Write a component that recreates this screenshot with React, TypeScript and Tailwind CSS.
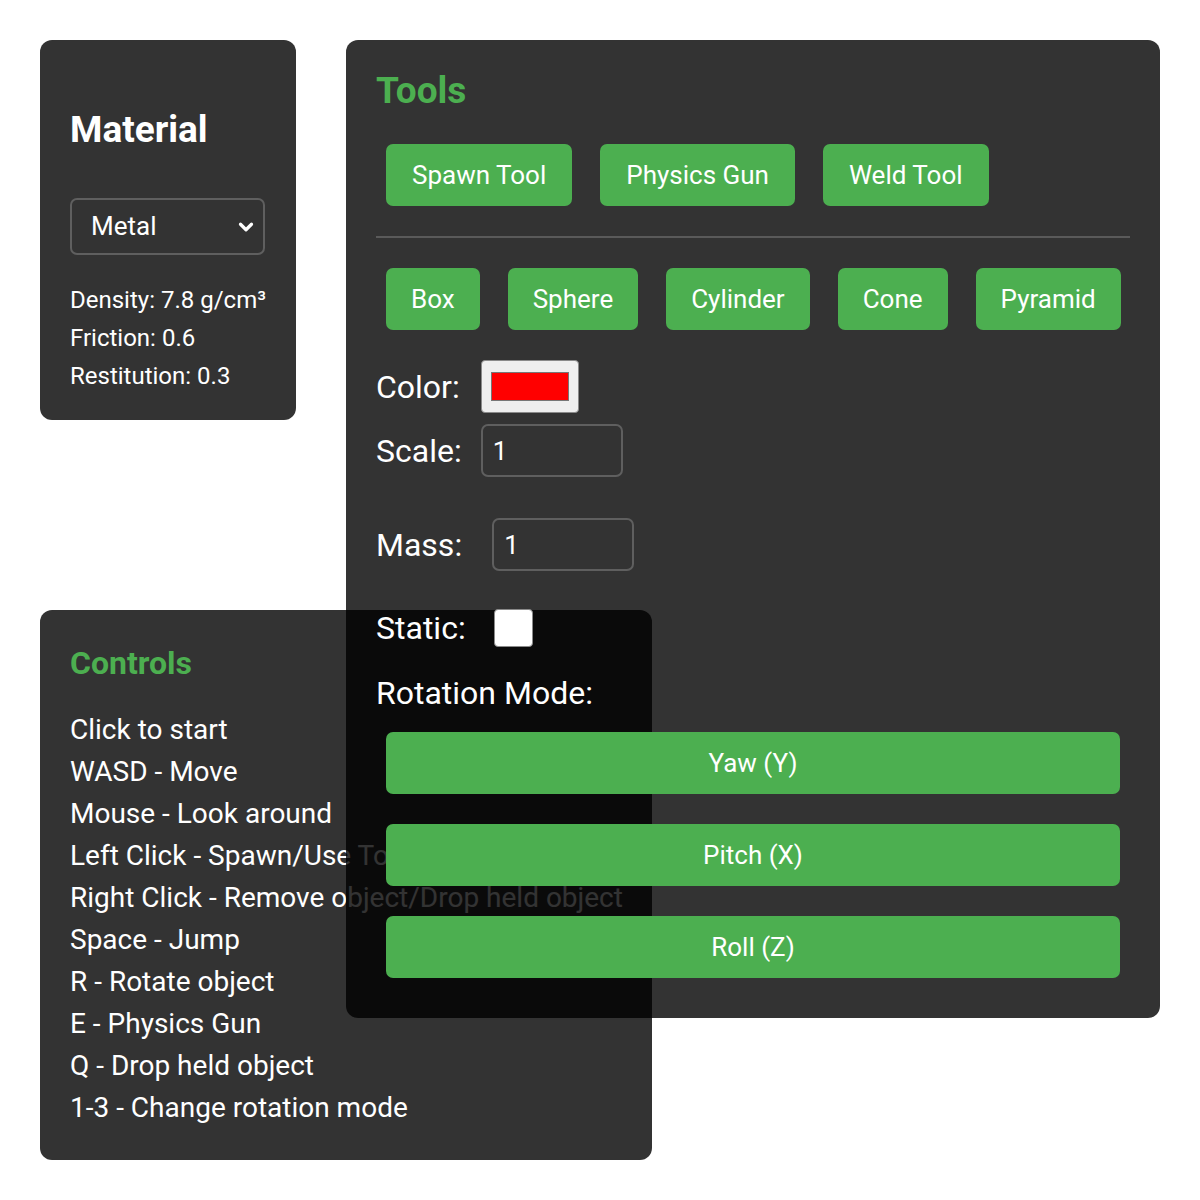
import React, { useState } from 'react';
import { ChevronDown } from 'lucide-react';

const toolButtons = ['Spawn Tool', 'Physics Gun', 'Weld Tool'];
const shapes = ['Box', 'Sphere', 'Cylinder', 'Cone', 'Pyramid'];
const rotationModes = ['Yaw (Y)', 'Pitch (X)', 'Roll (Z)'];
const controls = [
  'Click to start',
  'WASD - Move',
  'Mouse - Look around',
  'Left Click - Spawn/Use Tool',
  'Right Click - Remove object/Drop held object',
  'Space - Jump',
  'R - Rotate object',
  'E - Physics Gun',
  'Q - Drop held object',
  '1-3 - Change rotation mode',
];

const GreenButton: React.FC<{ label: string; className?: string }> = ({ label, className = 'px-[25px]' }) => (
  <button className={`h-[62px] bg-[#4caf50] text-white text-[26px] rounded-[7px] ${className}`}>
    {label}
  </button>
);

export default function App() {
  const [material, setMaterial] = useState('Metal');
  const [scale, setScale] = useState('1');
  const [mass, setMass] = useState('1');
  const [isStatic, setIsStatic] = useState(false);

  return (
    <div className="relative w-[1200px] h-[1200px] bg-white overflow-hidden text-white font-['Roboto',sans-serif]">
      {/* Material panel */}
      <div className="absolute left-[40px] top-[40px] w-[256px] h-[380px] bg-black/80 rounded-[12px] px-[30px] pt-[67px]">
        <h2 className="text-[37px] leading-[46px] font-bold">Material</h2>
        <div className="relative mt-[45px] w-[195px] h-[57px]">
          <select
            value={material}
            onChange={(e) => setMaterial(e.target.value)}
            className="appearance-none w-full h-full bg-transparent border-2 border-[#5f5f5f] rounded-[7px] pl-[19px] text-[26px] text-white outline-none"
          >
            <option className="text-black">Metal</option>
            <option className="text-black">Wood</option>
            <option className="text-black">Rubber</option>
          </select>
          <ChevronDown size={22} strokeWidth={3.5} className="absolute right-[8px] top-1/2 -translate-y-1/2 pointer-events-none" />
        </div>
        <div className="mt-[26px] text-[24px] leading-[38px]">
          <div>Density: 7.8 g/cm³</div>
          <div>Friction: 0.6</div>
          <div>Restitution: 0.3</div>
        </div>
      </div>

      {/* Controls panel */}
      <div className="absolute left-[40px] top-[610px] w-[612px] h-[550px] bg-black/80 rounded-[12px] px-[30px] pt-[33px]">
        <h3 className="text-[32px] leading-[40px] font-bold text-[#4caf50]">Controls</h3>
        <div className="mt-[26px] text-[28px] leading-[42px] whitespace-nowrap">
          {controls.map((c) => (
            <div key={c}>{c}</div>
          ))}
        </div>
      </div>

      {/* Tools panel */}
      <div className="absolute left-[346px] top-[40px] w-[814px] h-[978px] bg-black/80 rounded-[12px] px-[30px] pt-[29px]">
        <h2 className="text-[37px] leading-[44px] font-bold text-[#4caf50]">Tools</h2>

        <div className="flex gap-[28px] ml-[10px] mt-[31px]">
          {toolButtons.map((b) => (
            <GreenButton key={b} label={b} className="px-[26px]" />
          ))}
        </div>

        <div className="h-[2px] bg-[#5a5a5a] mt-[30px]" />

        <div className="flex gap-[28px] ml-[10px] mt-[30px]">
          {shapes.map((s) => (
            <GreenButton key={s} label={s} />
          ))}
        </div>

        <div className="text-[32px]">
          <div className="flex items-center h-[53px] mt-[30px]">
            <span>Color:</span>
            <div className="ml-[21px] w-[98px] h-[53px] bg-[#efefef] border border-[#8a8a8a] rounded-[4px] flex items-center justify-center">
              <div className="w-[78px] h-[29px] bg-[#ff0000] border border-[#777]" />
            </div>
          </div>

          <div className="flex items-center h-[53px] mt-[11px]">
            <span>Scale:</span>
            <input
              value={scale}
              onChange={(e) => setScale(e.target.value)}
              className="ml-[19px] w-[142px] h-[53px] bg-transparent border-2 border-[#5f5f5f] rounded-[7px] pl-[10px] text-[26px] text-white outline-none"
            />
          </div>

          <div className="flex items-center h-[53px] mt-[41px]">
            <span>Mass:</span>
            <input
              value={mass}
              onChange={(e) => setMass(e.target.value)}
              className="ml-[30px] w-[142px] h-[53px] bg-transparent border-2 border-[#5f5f5f] rounded-[7px] pl-[10px] text-[26px] text-white outline-none"
            />
          </div>

          <div className="flex items-center h-[38px] mt-[38px]">
            <span>Static:</span>
            <button
              onClick={() => setIsStatic(!isStatic)}
              className="ml-[28px] w-[39px] h-[38px] bg-white border border-[#8a8a8a] rounded-[4px]"
            />
          </div>

          <div className="leading-[40px] mt-[26px]">Rotation Mode:</div>
        </div>

        <div className="flex flex-col gap-[30px] mx-[10px] mt-[19px]">
          {rotationModes.map((m) => (
            <GreenButton key={m} label={m} className="w-full" />
          ))}
        </div>
      </div>
    </div>
  );
}
